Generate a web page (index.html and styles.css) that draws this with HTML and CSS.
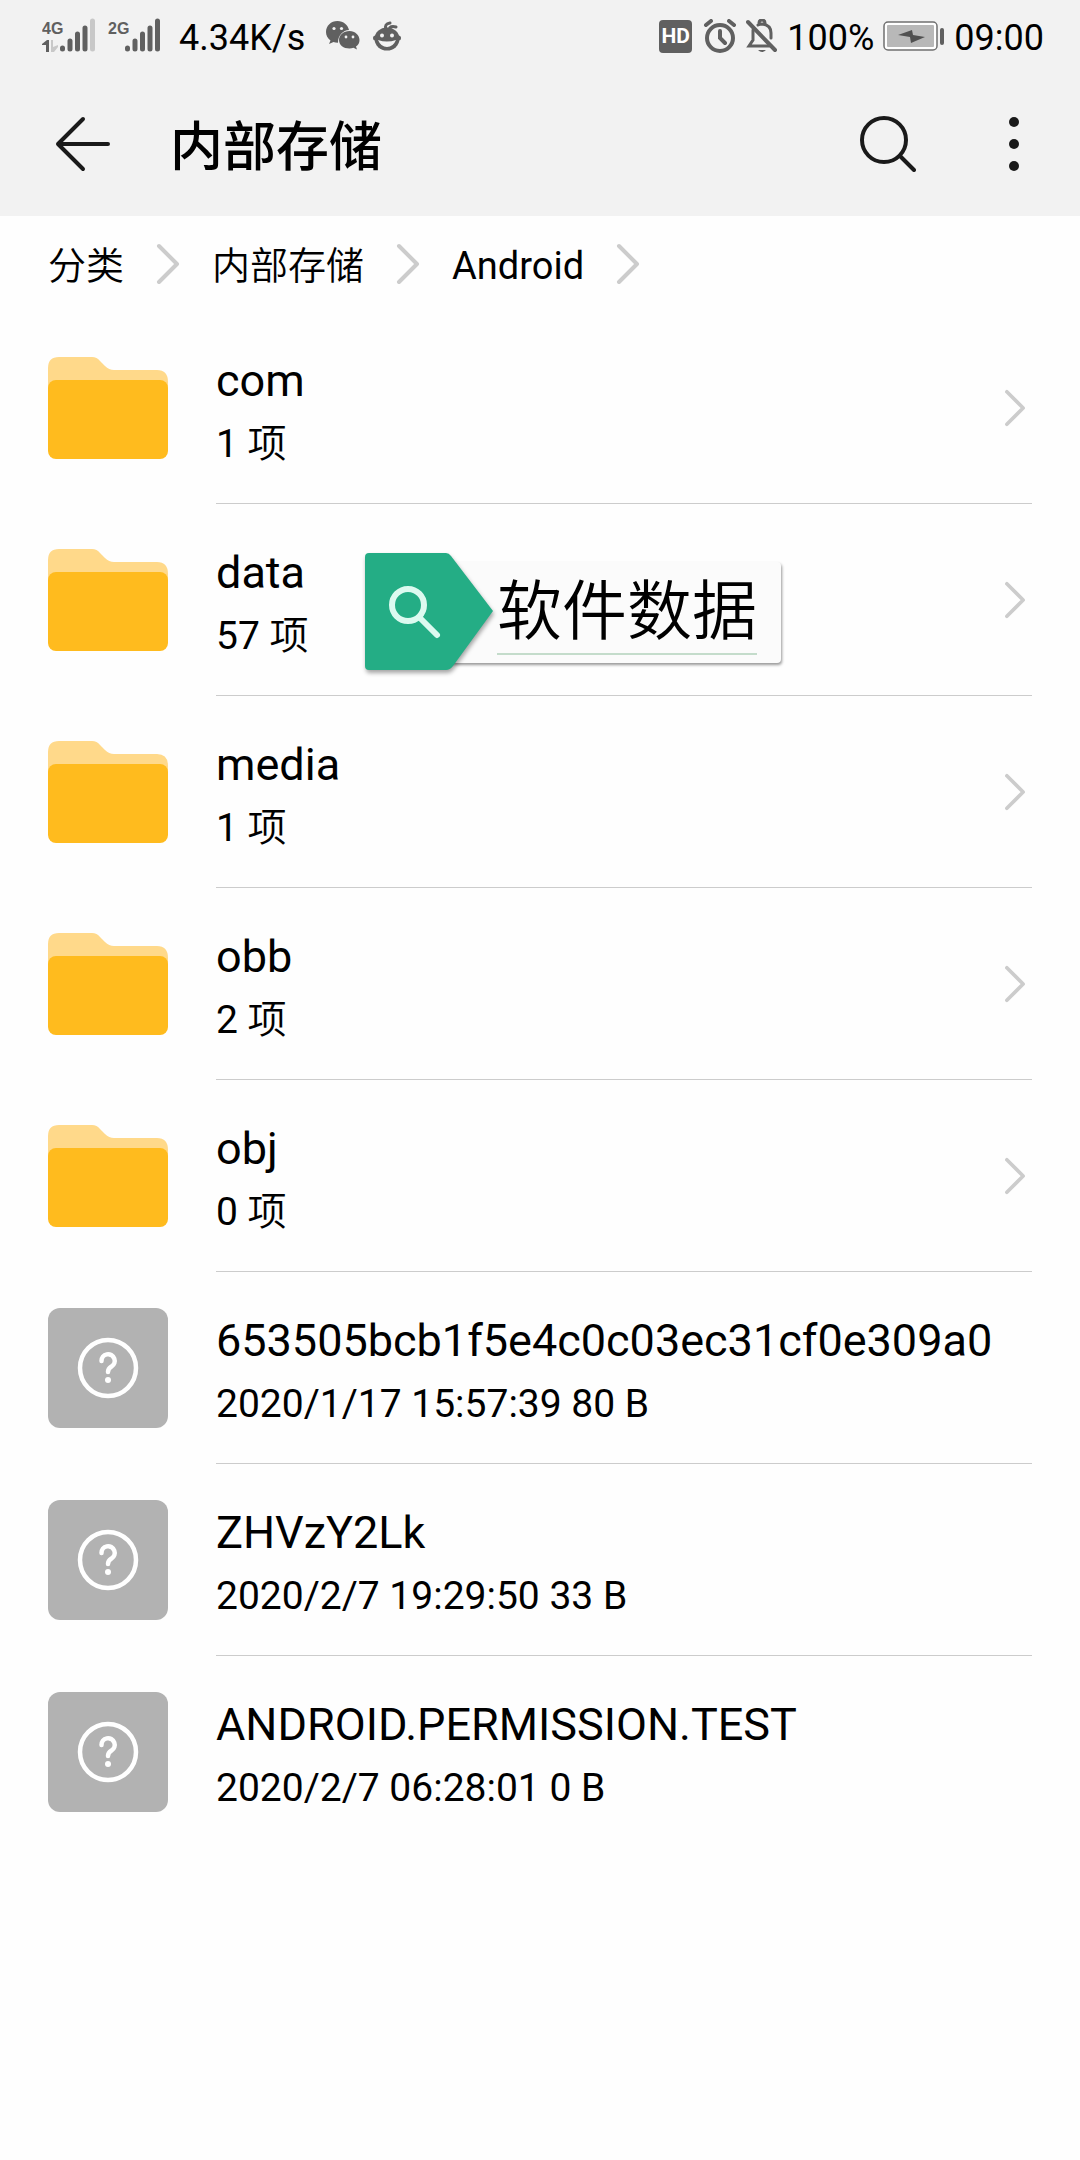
FILE: index.html
```
<!DOCTYPE html>
<html lang="zh-CN">
<head>
    <meta charset="UTF-8">
    <meta name="viewport" content="width=device-width, initial-scale=1.0">
    <title>内部存储</title>
    <link rel="stylesheet" href="styles.css">
</head>
<body>
    <!-- Shared icons -->
    <svg class="symbols" aria-hidden="true">
        <symbol id="folder" viewBox="0 0 120 102">
            <path d="M0 40V11Q0 0 11 0H44Q49 0 52 4L57 9Q61 13 66 13H109Q120 13 120 25V40Z" fill="#ffd98a"/>
            <rect y="23" width="120" height="79" rx="8" fill="#ffbb1e"/>
        </symbol>
        <symbol id="unknown" viewBox="0 0 120 120">
            <rect width="120" height="120" rx="12" fill="#b2b2b2"/>
            <circle cx="60" cy="60" r="28" fill="none" stroke="#fff" stroke-width="4.500"/>
            <path d="M53.500 53A6.600 6.600 0 1 1 63.500 58.500Q60 60.500 60 64" fill="none" stroke="#fff" stroke-width="4.500" stroke-linecap="round"/>
            <circle cx="60" cy="72" r="3" fill="#fff"/>
        </symbol>
        <symbol id="chevron" viewBox="0 0 24 42">
            <path d="M3 3L21 21L3 39" fill="none" stroke="#ccc" stroke-width="4" stroke-linecap="round" stroke-linejoin="round"/>
        </symbol>
    </svg>

    <div class="status-bar">
        <div class="status-group">
            <svg class="signal" width="124" height="40" viewBox="0 0 124 40" fill="#606060">
                <text class="network" x="0" y="18">4G</text>
                <text class="network" x="66" y="18">2G</text>
                <path d="M0 28L5 24H7V36H4V29H0Z"/>
                <path d="M9 24H11V31L16 29V31L12 36H9Z" fill="#c8c8c8"/>
                <g stroke="#606060" stroke-width="5" stroke-linecap="round">
                    <path d="M20.500 32V33M28 25V33M35.500 18V33M43 12V33"/>
                    <path d="M50.500 5V33" stroke="#c8c8c8"/>
                    <path d="M85.500 32V33M93 25V33M100.500 18V33M108 12V33M115.500 5V33"/>
                </g>
            </svg>
            <span class="speed">4.34K/s</span>
            <svg width="34" height="30" viewBox="0 0 34 30" fill="#606060">
                <path d="M11.500 0C5 0 0 4.800 0 11C0 14.500 1.700 17.500 4.500 19.500L3 23L7.500 21Q9 21.700 12 21.700C12 14 17 9.500 23 9C22 4 17.500 0 11.500 0Z"/>
                <path d="M23.500 10C17.500 10 13 14 13 19C13 24 17.500 27.500 23.500 27.500Q25.500 27.500 27.500 26.800L31 28.500L30 25.500Q33.500 23 33.500 19C33.500 14 29 10 23.500 10Z"/>
                <g fill="#f2f2f2">
                    <circle cx="8" cy="7.500" r="1.600"/>
                    <circle cx="15.500" cy="7.500" r="1.600"/>
                    <circle cx="20" cy="16" r="1.400"/>
                    <circle cx="27" cy="16" r="1.400"/>
                </g>
            </svg>
            <svg width="28" height="30" viewBox="0 0 28 30">
                <ellipse cx="14" cy="18" rx="12.500" ry="11.500" fill="#606060"/>
                <circle cx="2.500" cy="17" r="2.500" fill="#606060"/>
                <circle cx="25.500" cy="17" r="2.500" fill="#606060"/>
                <path d="M13 8Q11 3 17 2M16 9Q17 4 23 6" fill="none" stroke="#606060" stroke-width="3" stroke-linecap="round"/>
                <circle cx="9" cy="14.500" r="2" fill="#f2f2f2"/>
                <circle cx="19" cy="14.500" r="2" fill="#f2f2f2"/>
                <path d="M5 19Q14 22 23 19Q20 26 14 26Q8 26 5 19Z" fill="#f2f2f2"/>
            </svg>
        </div>
        <div class="status-group status-right">
            <span class="hd">HD</span>
            <svg width="34" height="34" viewBox="0 0 34 34" fill="none" stroke="#606060" stroke-width="4" stroke-linecap="round">
                <circle cx="17" cy="19" r="13"/>
                <path d="M17 12V19L22 24M3 6L8 2M31 6L26 2"/>
            </svg>
            <svg width="32" height="34" viewBox="0 0 32 34" fill="none" stroke="#606060" stroke-width="3" stroke-linecap="round">
                <path d="M7 11V21L3 27H23M12 6Q14 5 16 5Q25 6 25 14V19M13 4Q13 1 16 1Q19 1 19 4"/>
                <path d="M2 3L29 31" stroke-width="4"/>
                <path d="M12 31H20Q16 35 12 31Z" fill="#606060" stroke="none"/>
            </svg>
            <span>100%</span>
            <svg class="battery" width="62" height="30" viewBox="0 0 62 30">
                <rect x="1" y="1" width="53" height="28" rx="4" fill="#fff" stroke="#707070" stroke-width="1.500"/>
                <rect x="4" y="4" width="47" height="22" rx="1" fill="#b8b8b8"/>
                <path d="M15 14L29 9L30 14L42 16L28 22L27 16Z" fill="#505050"/>
                <rect x="57" y="7" width="4" height="17" rx="2" fill="#606060"/>
            </svg>
            <span>09:00</span>
        </div>
    </div>

    <header class="header">
        <button class="icon-button" type="button" aria-label="返回">
            <svg width="56" height="56" viewBox="0 0 56 56" fill="none" stroke="#1a1a1a" stroke-width="4" stroke-linecap="round" stroke-linejoin="round">
                <path d="M29 3L4 28L29 53M4 28H54"/>
            </svg>
        </button>
        <h1 class="title">内部存储</h1>
        <button class="icon-button" type="button" aria-label="搜索">
            <svg width="56" height="56" viewBox="0 0 56 56" fill="none" stroke="#1a1a1a" stroke-width="4" stroke-linecap="round">
                <circle cx="24" cy="24" r="22"/>
                <path d="M40 40L54 54"/>
            </svg>
        </button>
        <button class="icon-button more" type="button" aria-label="更多">
            <svg width="12" height="56" viewBox="0 0 12 56" fill="#1a1a1a">
                <circle cx="6" cy="6" r="5"/>
                <circle cx="6" cy="28" r="5"/>
                <circle cx="6" cy="50" r="5"/>
            </svg>
        </button>
    </header>

    <nav class="breadcrumb">
        <a class="light" href="#">分类</a>
        <svg class="chevron-large"><use href="#chevron"/></svg>
        <a class="light" href="#">内部存储</a>
        <svg class="chevron-large"><use href="#chevron"/></svg>
        <a href="#">Android</a>
        <svg class="chevron-large"><use href="#chevron"/></svg>
    </nav>

    <main class="file-list">
        <a class="file" href="#">
            <svg class="folder-icon"><use href="#folder"/></svg>
            <div class="file-body">
                <div class="file-text">
                    <div class="file-name">com</div>
                    <div class="file-info">1 <span class="light">项</span></div>
                </div>
                <svg class="chevron"><use href="#chevron"/></svg>
            </div>
        </a>
        <a class="file" href="#">
            <svg class="folder-icon"><use href="#folder"/></svg>
            <div class="file-body">
                <div class="file-text">
                    <div class="file-name">data</div>
                    <div class="file-info">57 <span class="light">项</span></div>
                </div>
                <svg class="chevron"><use href="#chevron"/></svg>
            </div>
            <!-- Label over the row -->
            <div class="tag">
                <svg class="tag-arrow" width="128" height="118" viewBox="0 0 128 118">
                    <path d="M4 0H81Q84 0 86 3L128 58L88 113Q85 117 81 117H4Q0 117 0 113V4Q0 0 4 0Z" fill="#24ad85"/>
                    <circle cx="43" cy="52" r="16" fill="none" stroke="#dcfaf0" stroke-width="6"/>
                    <path d="M55 65L72 82" stroke="#dcfaf0" stroke-width="6" stroke-linecap="round"/>
                </svg>
                <div class="tag-card"><span class="tag-text light">软件数据</span></div>
            </div>
        </a>
        <a class="file" href="#">
            <svg class="folder-icon"><use href="#folder"/></svg>
            <div class="file-body">
                <div class="file-text">
                    <div class="file-name">media</div>
                    <div class="file-info">1 <span class="light">项</span></div>
                </div>
                <svg class="chevron"><use href="#chevron"/></svg>
            </div>
        </a>
        <a class="file" href="#">
            <svg class="folder-icon"><use href="#folder"/></svg>
            <div class="file-body">
                <div class="file-text">
                    <div class="file-name">obb</div>
                    <div class="file-info">2 <span class="light">项</span></div>
                </div>
                <svg class="chevron"><use href="#chevron"/></svg>
            </div>
        </a>
        <a class="file" href="#">
            <svg class="folder-icon"><use href="#folder"/></svg>
            <div class="file-body">
                <div class="file-text">
                    <div class="file-name">obj</div>
                    <div class="file-info">0 <span class="light">项</span></div>
                </div>
                <svg class="chevron"><use href="#chevron"/></svg>
            </div>
        </a>
        <a class="file" href="#">
            <svg class="unknown-icon"><use href="#unknown"/></svg>
            <div class="file-body">
                <div class="file-text">
                    <div class="file-name">653505bcb1f5e4c0c03ec31cf0e309a0</div>
                    <div class="file-info">2020/1/17 15:57:39 80 B</div>
                </div>
            </div>
        </a>
        <a class="file" href="#">
            <svg class="unknown-icon"><use href="#unknown"/></svg>
            <div class="file-body">
                <div class="file-text">
                    <div class="file-name">ZHVzY2Lk</div>
                    <div class="file-info">2020/2/7 19:29:50 33 B</div>
                </div>
            </div>
        </a>
        <a class="file" href="#">
            <svg class="unknown-icon"><use href="#unknown"/></svg>
            <div class="file-body">
                <div class="file-text">
                    <div class="file-name">ANDROID.PERMISSION.TEST</div>
                    <div class="file-info">2020/2/7 06:28:01 0 B</div>
                </div>
            </div>
        </a>
    </main>
</body>
</html>
```
FILE: styles.css
```
* {
    box-sizing: border-box;
}
body {
    margin: 0;
    background-color: #fefefe;
    color: #000;
    font-family: Roboto, "Noto Sans CJK SC", sans-serif;
}
a {
    color: inherit;
    text-decoration: none;
}
svg {
    display: block;
    flex-shrink: 0;
}
.symbols {
    position: absolute;
    width: 0;
    height: 0;
}
.light {
    font-weight: 350;
}
.status-bar {
    display: flex;
    justify-content: space-between;
    align-items: center;
    height: 72px;
    padding: 0 36px 0 42px;
    background-color: #f2f2f2;
    font-size: 36px;
    line-height: 40px;
}
.status-bar span {
    padding-top: 4px;
}
.status-group {
    display: flex;
    align-items: center;
    gap: 13px;
}
.status-right {
    gap: 9px;
}
.network {
    font-family: "Liberation Sans Narrow", "Liberation Sans", sans-serif;
    font-size: 16px;
    font-weight: bold;
}
.speed {
    margin-right: 8px;
}
.status-bar .hd {
    width: 33px;
    height: 33px;
    padding: 0;
    margin-right: 2px;
    border-radius: 4px;
    background-color: #606060;
    color: #fff;
    font-size: 21px;
    font-weight: bold;
    line-height: 33px;
    text-align: center;
}
.header {
    display: flex;
    align-items: center;
    height: 144px;
    padding: 0 60px 0 54px;
    background-color: #f2f2f2;
}
.icon-button {
    padding: 0;
    border: none;
    background: none;
    cursor: pointer;
}
.more {
    margin-left: 92px;
}
.title {
    flex: 1;
    margin: 0 0 0 60px;
    padding-top: 8px;
    font-size: 53px;
    font-weight: 500;
    line-height: 72px;
}
.breadcrumb {
    display: flex;
    align-items: center;
    gap: 32px;
    height: 96px;
    padding: 0 48px;
    font-size: 38px;
    line-height: 48px;
}
.breadcrumb a {
    padding-top: 3px;
}
.chevron-large {
    width: 24px;
    height: 42px;
}
.file {
    position: relative;
    display: flex;
    align-items: center;
    gap: 48px;
    height: 192px;
    padding: 0 48px;
}
.folder-icon {
    width: 120px;
    height: 102px;
}
.unknown-icon {
    width: 120px;
    height: 120px;
}
.file-body {
    flex: 1;
    display: flex;
    justify-content: space-between;
    align-items: center;
    height: 100%;
    padding-right: 6px;
    border-bottom: 1px solid #ccc;
}
.file:last-child .file-body {
    border-bottom-color: transparent;
}
.file-text {
    padding-top: 10px;
}
.file-name {
    font-size: 45px;
    line-height: 62px;
}
.file-info {
    font-size: 39px;
    line-height: 64px;
}
.chevron {
    width: 22px;
    height: 38px;
}
.tag {
    position: absolute;
    top: 49px;
    left: 365px;
    display: flex;
    align-items: center;
}
.tag-arrow {
    position: relative;
    filter: drop-shadow(1px 3px 2px rgba(0, 0, 0, 0.35));
}
.tag-card {
    margin-left: -44px;
    padding: 9px 24px 8px 48px;
    border-radius: 4px;
    background-color: #fbfbfb;
    box-shadow: 1px 2px 3px rgba(0, 0, 0, 0.4);
}
.tag-text {
    display: block;
    border-bottom: 2px solid #c4dccb;
    font-size: 65px;
    line-height: 82px;
}
```
